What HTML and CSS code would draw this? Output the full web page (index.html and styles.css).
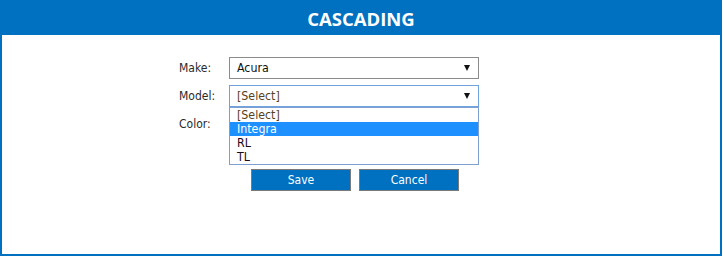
FILE: index.html
```html
<!DOCTYPE html>
<html>
<head>
<meta charset="utf-8">
<link rel="stylesheet" href="styles.css">
</head>
<body>
<div class="panel">
  <div class="header">CASCADING</div>
  <div class="form">
    <div class="grid">
      <div class="label">Make:</div>
      <div class="select"><span class="value">Acura</span><span class="arrow"></span></div>
      <div class="label">Model:</div>
      <div class="field">
        <div class="select focused"><span class="value placeholder">[Select]</span><span class="arrow"></span></div>
        <ul class="listbox">
          <li class="placeholder">[Select]</li>
          <li class="selected">Integra</li>
          <li>RL</li>
          <li>TL</li>
        </ul>
      </div>
      <div class="label">Color:</div>
      <div class="select"><span class="value"></span><span class="arrow"></span></div>
    </div>
    <div class="buttons">
      <button class="btn">Save</button>
      <button class="btn">Cancel</button>
    </div>
  </div>
</div>
</body>
</html>
```
FILE: styles.css
```css
html, body {
  margin: 0;
  padding: 0;
  background: #ffffff;
}
.panel {
  width: 722px;
  height: 256px;
  box-sizing: border-box;
  border: 2px solid #0070c0;
  border-top: 0;
  background: #ffffff;
}
.header {
  height: 35px;
  box-sizing: border-box;
  margin: 0 -2px;
  padding-top: 2px;
  line-height: 33px;
  background: #0070c0;
  color: #ffffff;
  text-align: center;
  font-family: "Open Sans", "DejaVu Sans", sans-serif;
  font-weight: 700;
  font-size: 18.5px;
}
.form {
  padding-top: 22px;
  padding-left: 176px;
  font-family: "DejaVu Sans Condensed", "DejaVu Sans", sans-serif;
  font-stretch: condensed;
  font-size: 12px;
}
.grid {
  display: grid;
  grid-template-columns: 51px 250px;
  grid-auto-rows: 22px;
  row-gap: 6px;
}
.label {
  color: #2a2a2a;
  line-height: 22px;
  padding-left: 1px;
}
.field {
  position: relative;
}
.select {
  height: 22px;
  box-sizing: border-box;
  border: 1px solid #8c8c8c;
  background: #ffffff;
  display: flex;
  align-items: center;
  justify-content: space-between;
  padding: 0 8px 0 7px;
  color: #111111;
  font-size: 12.3px;
}
.select.focused {
  border-color: #6fa3e0;
}
.placeholder {
  color: #5a3f1a;
}
.arrow {
  width: 0;
  height: 0;
  border-left: 3.5px solid transparent;
  border-right: 3.5px solid transparent;
  border-top: 6px solid #111111;
  margin-top: -1px;
}
.listbox {
  position: absolute;
  left: 0;
  top: 22px;
  width: 250px;
  box-sizing: border-box;
  margin: 0;
  padding: 0;
  list-style: none;
  border: 1px solid #7f9fd0;
  background: #ffffff;
  z-index: 2;
  font-size: 12.3px;
}
.listbox li {
  height: 14px;
  line-height: 14px;
  padding-left: 7px;
  color: #1a0a14;
}
.listbox li.placeholder {
  color: #5a3f1a;
}
.listbox li.selected {
  background: #1e90ff;
  color: #ffffff;
}
.buttons {
  display: flex;
  gap: 8px;
  margin-top: 34px;
  padding-left: 73px;
}
.btn {
  width: 100px;
  height: 22px;
  box-sizing: border-box;
  margin: 0;
  padding: 0;
  border: 1px solid #7a7a7a;
  background: #0070c0;
  color: #ffffff;
  font-family: "DejaVu Sans Condensed", "DejaVu Sans", sans-serif;
  font-stretch: condensed;
  font-size: 12px;
  line-height: 20px;
  text-align: center;
}
```
